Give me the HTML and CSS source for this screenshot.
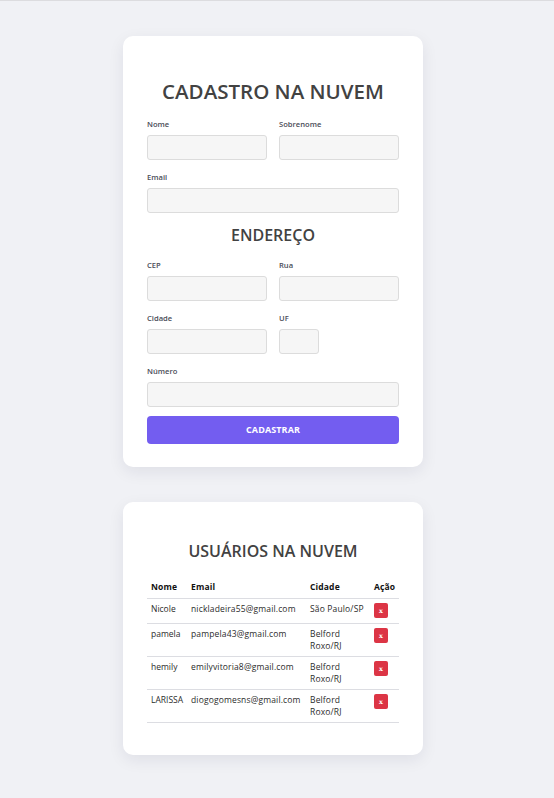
FILE: index.html
```html
<!DOCTYPE html>
<html lang="pt-BR">
<head>
<meta charset="utf-8">
<title>Cadastro na Nuvem</title>
<link rel="stylesheet" href="styles.css">
</head>
<body>
<main class="page">
  <section class="card card-form">
    <h1 class="title">CADASTRO NA NUVEM</h1>
    <form class="form">
      <div class="row">
        <div class="field"><label class="label">Nome</label><input class="input" type="text"></div>
        <div class="field"><label class="label">Sobrenome</label><input class="input" type="text"></div>
      </div>
      <div class="field"><label class="label">Email</label><input class="input" type="email"></div>
      <h2 class="subtitle">ENDEREÇO</h2>
      <div class="row">
        <div class="field"><label class="label">CEP</label><input class="input" type="text"></div>
        <div class="field"><label class="label">Rua</label><input class="input" type="text"></div>
      </div>
      <div class="row">
        <div class="field"><label class="label">Cidade</label><input class="input" type="text"></div>
        <div class="field"><label class="label">UF</label><input class="input input-uf" type="text"></div>
      </div>
      <div class="field"><label class="label">Número</label><input class="input" type="text"></div>
      <button class="submit" type="button">CADASTRAR</button>
    </form>
  </section>

  <section class="card card-table">
    <h2 class="subtitle table-title">USUÁRIOS NA NUVEM</h2>
    <table class="users">
      <colgroup>
        <col class="c-nome"><col class="c-email"><col class="c-cidade"><col class="c-acao">
      </colgroup>
      <thead>
        <tr><th>Nome</th><th>Email</th><th>Cidade</th><th>Ação</th></tr>
      </thead>
      <tbody>
        <tr><td class="name">Nicole</td><td>nickladeira55@gmail.com</td><td>São Paulo/SP</td><td><button class="del" type="button">x</button></td></tr>
        <tr><td class="name">pamela</td><td>pampela43@gmail.com</td><td>Belford Roxo/RJ</td><td><button class="del" type="button">x</button></td></tr>
        <tr><td class="name">hemily</td><td>emilyvitoria8@gmail.com</td><td>Belford Roxo/RJ</td><td><button class="del" type="button">x</button></td></tr>
        <tr><td class="name">LARISSA</td><td>diogogomesns@gmail.com</td><td>Belford Roxo/RJ</td><td><button class="del" type="button">x</button></td></tr>
      </tbody>
    </table>
  </section>
</main>
</body>
</html>
```

FILE: styles.css
```css
* { box-sizing: border-box; }

html, body {
  margin: 0;
}

body {
  background: #f0f1f5;
  border-top: 1px solid #dcdcdf;
  padding: 35px 8px 44px 0;
  font-family: "Open Sans", "Liberation Sans", sans-serif;
  color: #333;
}

.page {
  width: 300px;
  margin: 0 auto;
  display: flex;
  flex-direction: column;
  gap: 35px;
}

.card {
  background: #fff;
  border-radius: 10px;
  box-shadow: 0 5px 16px rgba(30, 30, 60, 0.08);
}

.card-form {
  padding: 43px 24px 23px;
}

.card-table {
  padding: 39px 24px 32px;
}

.title {
  margin: 0 0 16px;
  font-size: 20.5px;
  line-height: 24px;
  font-weight: 600;
  text-align: center;
  color: #424242;
}

.subtitle {
  margin: 11.5px 0 15.5px;
  font-size: 16px;
  line-height: 20px;
  font-weight: 600;
  text-align: center;
  color: #424242;
}

.table-title {
  margin: 0 0 15px;
}

.form {
  display: flex;
  flex-direction: column;
}

.row {
  display: grid;
  grid-template-columns: 1fr 1fr;
  column-gap: 12px;
}

.form > .row + .row,
.form > .row + .field,
.form > .field + .row,
.form > .field + .field {
  margin-top: 12px;
}

.field {
  display: flex;
  flex-direction: column;
  align-items: stretch;
}

.label {
  font-size: 7.6px;
  line-height: 10px;
  font-weight: 600;
  color: #4a4c57;
  margin-bottom: 6px;
}

.input {
  height: 25px;
  border: 1px solid #dcdcdc;
  border-radius: 3px;
  background: #f6f6f6;
  font: inherit;
  padding: 0 6px;
  width: 100%;
}

.input-uf {
  width: 40px;
}

.submit {
  margin-top: 8.5px;
  height: 28.5px;
  border: none;
  border-radius: 4px;
  background: #735df0;
  color: #fff;
  font-family: inherit;
  font-size: 9px;
  font-weight: 700;
  letter-spacing: 0.1px;
}

.users {
  width: 100%;
  table-layout: fixed;
  border-collapse: collapse;
  font-size: 8.5px;
  letter-spacing: 0.15px;
}

.c-nome { width: 40px; }
.c-email { width: 119px; }
.c-cidade { width: 64px; }
.c-acao { width: 29px; }

.users th {
  text-align: left;
  font-weight: 700;
  color: #111;
  line-height: 12px;
  padding: 5px 4px;
  border-bottom: 1px solid #dcdde2;
}

.users td {
  vertical-align: top;
  line-height: 12px;
  padding: 4px;
  color: #2b2b2b;
  border-bottom: 1px solid #dcdde2;
  word-wrap: break-word;
}

.users td.name {
  white-space: nowrap;
  letter-spacing: 0;
}

.del {
  display: block;
  width: 14px;
  height: 15px;
  margin-bottom: 1px;
  padding: 0;
  border: none;
  border-radius: 2px;
  background: #dc3545;
  color: #fff;
  font-family: "DejaVu Serif", serif;
  font-size: 6.5px;
  font-weight: 700;
  line-height: 14px;
  text-align: center;
}
```
